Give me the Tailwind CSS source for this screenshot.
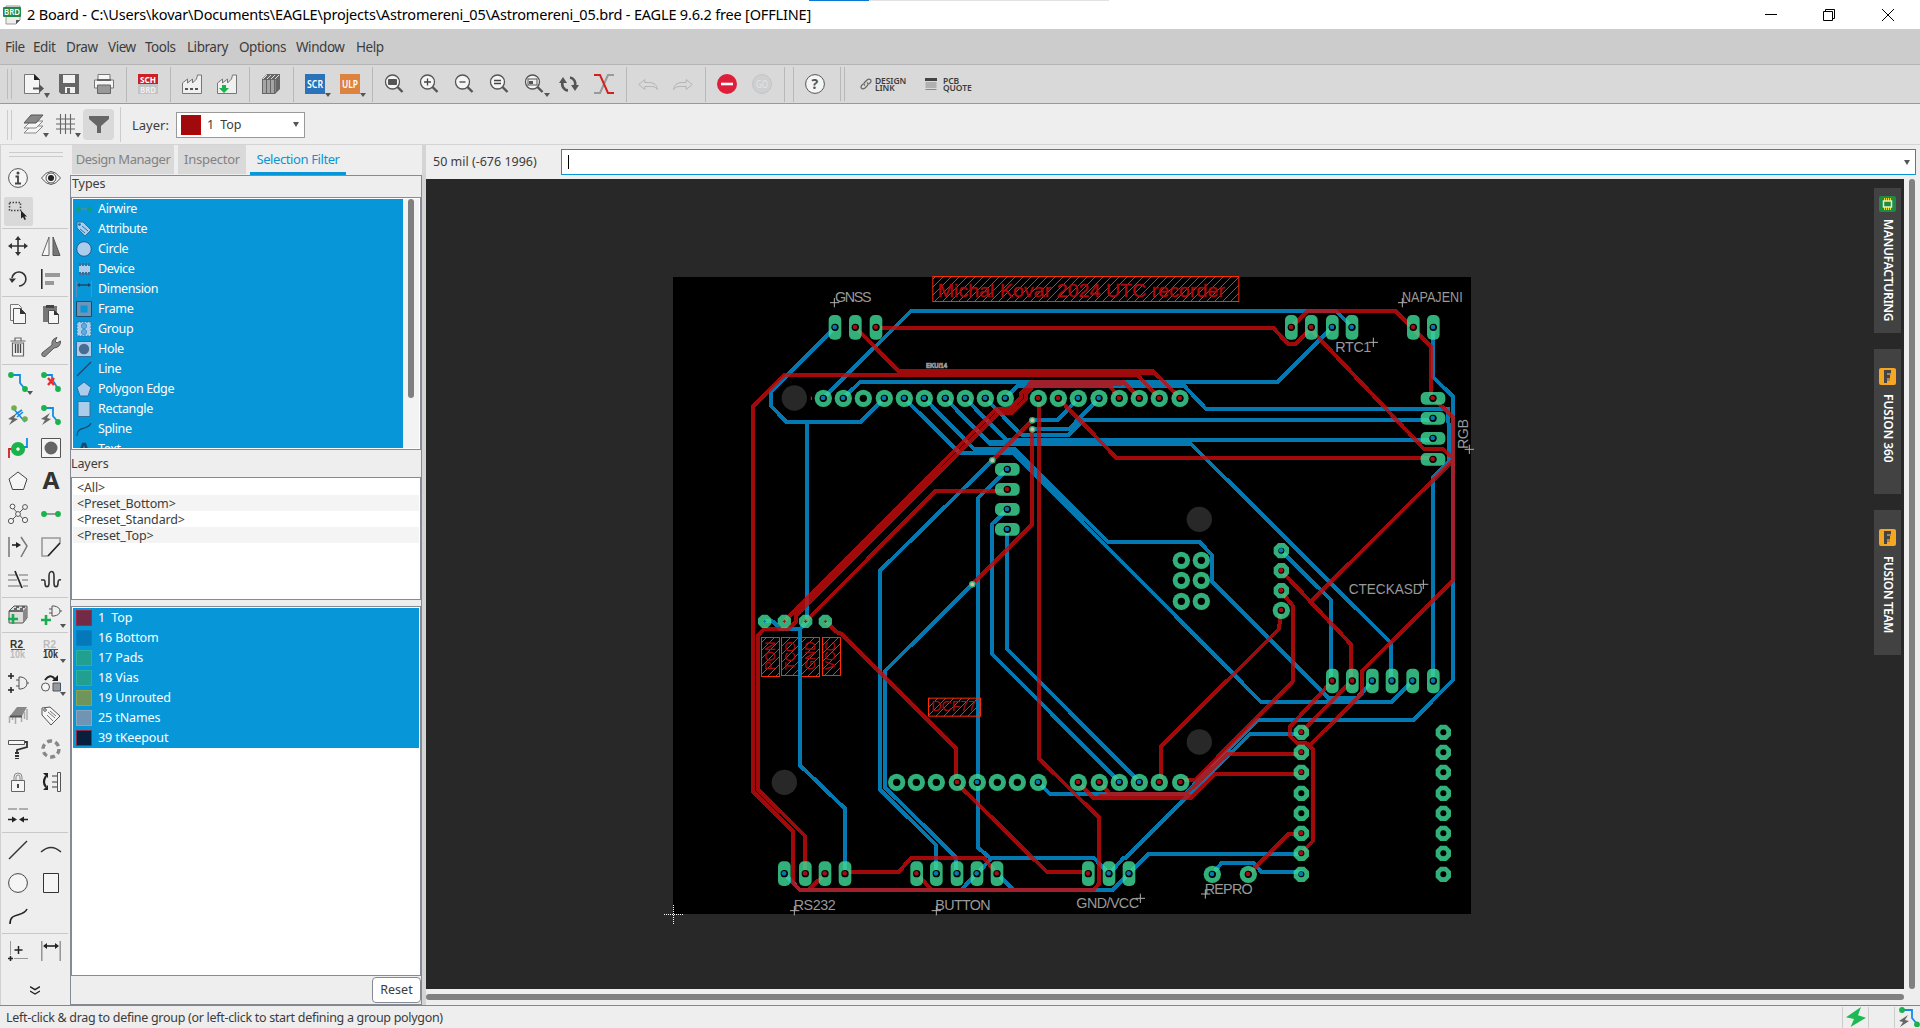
<!DOCTYPE html>
<html lang="en">
<head>
<meta charset="utf-8">
<title>2 Board - EAGLE</title>
<script src="https://cdn.jsdelivr.net/npm/@tailwindcss/browser@4"></script>
</head>
<body class="w-[1920px] h-[1028px] overflow-hidden flex flex-col bg-[#eeeeee] text-[#3c3c3c] font-['Noto_Sans',sans-serif] text-[12.5px] leading-none whitespace-nowrap">

<!-- shared shapes -->
<svg width="0" height="0" class="absolute">
  <defs>
    <g id="lens" fill="none" stroke="#555"><circle cx="8.500" cy="8" r="7" fill="#f5f5f5" stroke-width="1.300"/><path d="M13.500 13l5 5" stroke-width="2.400"/></g>
    <path id="bolt" d="M9 0 0 6l4 1-3 5 9-6-4-1z" fill="#666"/>
  </defs>
</svg>

<header class="relative h-[29px] shrink-0 bg-white flex items-center text-black">
  <svg class="ml-[3px] w-[18px] h-[20px]" viewBox="0 0 18 20"><path d="M3 1h14v14l-4 4H3z" fill="#eee" stroke="#999"/><path d="M13 19v-4h4z" fill="#555"/><rect y="2" width="18" height="10" rx="1" fill="#1f8a44"/><text x="1" y="10" font-size="8" font-weight="600" fill="#fff" textLength="16" lengthAdjust="spacingAndGlyphs" font-family="Noto Sans">BRD</text></svg>
  <span class="ml-[6px] text-[14.5px] tracking-[-0.18px]">2 Board - C:\Users\kovar\Documents\EAGLE\projects\Astromereni_05\Astromereni_05.brd - EAGLE 9.6.2 free [OFFLINE]</span>
  <div class="absolute left-[809px] top-0 flex h-px w-[300px] bg-[#e2e2e2]"><div class="w-[60px] bg-[#0a78d4]"></div></div>
  <svg class="ml-auto mr-[26px] w-[130px] h-[14px]" viewBox="0 0 130 14" fill="none" stroke="#000"><path d="M1 6.500h12M59.500 3.500h9v9h-9zM61.500 3V1.500h9v9H69M118 1l12 12M130 1l-12 12"/></svg>
</header>

<nav class="h-[36px] shrink-0 bg-[#cccccc] border-b border-[#b4b4b4] flex items-center pl-[5px] pt-[2px] gap-[10px] text-[13.5px] tracking-[-0.45px]">
  <span class="w-[18px]">File</span><span class="w-[23px]">Edit</span><span class="w-[32px]">Draw</span><span class="w-[27px]">View</span><span class="w-[32px]">Tools</span><span class="w-[42px]">Library</span><span class="w-[47px]">Options</span><span class="w-[50px]">Window</span><span>Help</span>
</nav>

<div class="h-[39px] shrink-0 bg-[#d9d9d9] border-b border-[#999999] flex items-center pl-[7px]">
  <div class="w-[5px] h-[30px] border-x border-[#bbb]"></div>
  <div class="flex gap-[15px] ml-[12px]">
    <svg class="w-[26px] h-[24px] mt-[4px] mr-[-6px]" viewBox="0 0 26 24"><path d="M.5.500h10l5 5v14H.500z" fill="#f5f5f5" stroke="#777"/><path d="M10 0v6h6z" fill="#222"/><path d="M9 14.500h7" stroke="#555" stroke-width="2"/><path d="M15 10l5 4.500-5 4.500z" fill="#555"/><path d="M20 19h6l-3 5z" fill="#555"/></svg>
    <svg class="w-[20px] h-[20px] mt-[4px]" viewBox="0 0 20 20"><path d="M0 0h20v20H2l-2-2z" fill="#666"/><path d="M4 1h12v8H4zM6 13h10v6H6z" fill="#f2f2f2"/><path d="M8 14h3v5H8z" fill="#666"/></svg>
    <svg class="w-[20px] h-[20px] mt-[4px]" viewBox="0 0 20 20"><path d="M4 .5h12V6H4zM.500 6h19v8H.500z" fill="#f5f5f5" stroke="#777"/><path d="M3 6h14" stroke="#555" stroke-width="1.500"/><path d="M3.500 11h13v8.500h-13z" fill="#999" stroke="#666"/></svg>
  </div>
  <div class="w-px h-[35px] bg-[#b8b8b8] ml-[12px] mr-[11px]"></div>
  <svg class="w-[20px] h-[20px]" viewBox="0 0 20 20" font-family="Noto Sans" font-weight="700" font-size="9"><rect width="20" height="10" fill="#cc2027"/><rect y="10" width="20" height="10" fill="#c4c4c4"/><text x="2" y="8.500" fill="#fff" textLength="16" lengthAdjust="spacingAndGlyphs">SCH</text><text x="2" y="18.500" fill="#eee" textLength="16" lengthAdjust="spacingAndGlyphs">BRD</text></svg>
  <div class="w-px h-[35px] bg-[#b8b8b8] ml-[12px] mr-[11px]"></div>
  <div class="flex gap-[15px]">
    <svg class="w-[20px] h-[20px]" viewBox="0 0 20 20"><path d="M.5 19.500V9l5-4v4l5-4v4l4-4 1-4h4v18.500z" fill="#f0f0f0" stroke="#777"/><path d="M3 15h13" stroke="#555" stroke-width="2" stroke-dasharray="3 2"/></svg>
    <svg class="w-[20px] h-[20px]" viewBox="0 0 20 20"><path d="M.5 19.500V9l5-4v4l5-4v4l4-4 1-4h4v18.500z" fill="#f0f0f0" stroke="#777"/><path d="M5 11h4v3h3l-5 5-5-5h3z" fill="#18b44b"/></svg>
  </div>
  <div class="w-px h-[35px] bg-[#b8b8b8] ml-[12px] mr-[11px]"></div>
  <svg class="w-[20px] h-[20px]" viewBox="0 0 20 20"><path d="M1 5l5-5h13v15l-5 5H1z" fill="#666"/><path d="M2 6h3v13H2zM6 6h3v13H6zM10 6h3v13h-3z" fill="#a5a5a5"/><path d="M2 5l4-4M6 5l4-4M10 5l4-4M14 5l4-4" stroke="#ddd"/><path d="M14.500 6v12" stroke="#888"/></svg>
  <div class="w-px h-[35px] bg-[#b8b8b8] ml-[12px] mr-[11px]"></div>
  <div class="flex gap-[9px]">
    <svg class="w-[26px] h-[24px] mt-[4px]" viewBox="0 0 26 24" font-family="Noto Sans" font-weight="600" font-size="10"><rect width="20" height="20" fill="#2a72ba"/><text x="2" y="13.500" fill="#fff" textLength="16" lengthAdjust="spacingAndGlyphs">SCR</text><path d="M20 19h6l-3 4z" fill="#555"/></svg>
    <svg class="w-[26px] h-[24px] mt-[4px]" viewBox="0 0 26 24" font-family="Noto Sans" font-weight="600" font-size="10"><rect width="20" height="20" fill="#dc843f"/><text x="2" y="13.500" fill="#fff" textLength="16" lengthAdjust="spacingAndGlyphs">ULP</text><path d="M20 19h6l-3 4z" fill="#555"/></svg>
  </div>
  <div class="w-px h-[35px] bg-[#b8b8b8] ml-[6px] mr-[11px]"></div>
  <div class="flex gap-[15px]">
    <svg class="w-[20px] h-[20px]" viewBox="0 0 20 20"><use href="#lens"/><rect x="4" y="5" width="9" height="6" rx="1" fill="#555"/></svg>
    <svg class="w-[20px] h-[20px]" viewBox="0 0 20 20"><use href="#lens"/><path d="M5 8h7M8.500 4.500v7" stroke="#444" stroke-width="1.300"/></svg>
    <svg class="w-[20px] h-[20px]" viewBox="0 0 20 20"><use href="#lens"/><path d="M5.500 8h6" stroke="#444" stroke-width="1.300"/></svg>
    <svg class="w-[20px] h-[20px]" viewBox="0 0 20 20"><use href="#lens"/><path d="M5 6.500h7M5 9.500h7" stroke="#444" stroke-width="1.300"/></svg>
    <svg class="w-[26px] h-[20px] mr-[-6px] overflow-visible" viewBox="0 0 26 20"><use href="#lens"/><rect x="4" y="5" width="9" height="6" fill="#eee" stroke="#555"/><rect x="5" y="7" width="4" height="3" fill="#555"/><path d="M20 19h6l-3 4z" fill="#555"/></svg>
    <svg class="w-[20px] h-[20px]" viewBox="0 0 20 20" fill="none" stroke="#555" stroke-width="2.600"><path d="M9 16.500A6.500 6.500 0 0 1 4 7M11 3.500A6.500 6.500 0 0 1 16 12"/><path d="M4 3l4 6H0zM16 17l-4-6h8z" fill="#555" stroke="none"/></svg>
    <svg class="w-[20px] h-[20px]" viewBox="0 0 20 20" fill="none" stroke-width="2"><path d="M0 19h6l8-18h6" stroke="#999"/><path d="M0 1h6l8 18h6" stroke="#d2201e"/></svg>
  </div>
  <div class="w-px h-[35px] bg-[#b8b8b8] ml-[12px] mr-[11px]"></div>
  <div class="flex gap-[15px]">
    <svg class="w-[20px] h-[20px]" viewBox="0 0 20 20" fill="none" stroke="#b4b4b4"><path d="M.8 10.500l6-5v3h4c6 0 8 3 8.500 7-2-3-4-3-8.500-3h-4v3z"/></svg>
    <svg class="w-[20px] h-[20px]" viewBox="0 0 20 20" fill="none" stroke="#b4b4b4"><path d="M19.200 10.500l-6-5v3h-4c-6 0-8 3-8.500 7 2-3 4-3 8.500-3h4v3z"/></svg>
  </div>
  <div class="w-px h-[35px] bg-[#b8b8b8] ml-[12px] mr-[11px]"></div>
  <div class="flex gap-[15px]">
    <svg class="w-[20px] h-[20px]" viewBox="0 0 20 20"><circle cx="10" cy="10" r="10" fill="#de1f39"/><path d="M4 10h12" stroke="#fff" stroke-width="2.600"/></svg>
    <svg class="w-[20px] h-[20px]" viewBox="0 0 20 20"><circle cx="10" cy="10" r="9.500" fill="#cfcfcf" stroke="#c4c4c4"/><text x="4" y="14" font-size="10" font-family="Noto Sans" fill="#e4e4e4" textLength="12" lengthAdjust="spacingAndGlyphs">GO</text></svg>
  </div>
  <div class="w-px h-[35px] bg-[#b8b8b8] ml-[12px]"></div>
  <div class="w-px h-[35px] bg-[#b8b8b8] ml-[8px] mr-[11px]"></div>
  <svg class="w-[20px] h-[20px]" viewBox="0 0 20 20"><circle cx="10" cy="10" r="9.400" fill="#f5f5f5" stroke="#555"/><text x="6.500" y="15" font-size="14" font-weight="700" font-family="Noto Sans" fill="#555">?</text></svg>
  <div class="w-[5px] h-[34px] border-x border-[#b8b8b8] ml-[15px]"></div>
  <svg class="w-[12px] h-[12px] ml-[15px]" viewBox="0 0 12 12" fill="none" stroke="#666" stroke-width="1.200"><path d="M5 7.500c-2-1.500-1-2.500 0-3.500l2-2c2.500-2 5 0 3.500 2.500L9 6M7 4.500c2 1.500 1 2.500 0 3.500L5 10c-2.500 2-5 0-3.500-2.500L3 6"/></svg>
  <div class="ml-[3px] w-[45px] text-[8.500px] leading-[7.500px] font-semibold tracking-[-0.1px]"><div class="h-[7.500px]">DESIGN</div><div class="h-[7.500px]">LINK</div></div>
  <svg class="w-[12px] h-[13px] ml-[5px]" viewBox="0 0 12 13"><path d="M0 0h12v3H0z" fill="#444"/><path d="M.5 5h11M.500 7h11M.500 9h11M.500 11.500h11" stroke="#888"/></svg>
  <div class="ml-[6px] text-[8.500px] leading-[7.500px] font-semibold tracking-[-0.1px]"><div class="h-[7.500px]">PCB</div><div class="h-[7.500px]">QUOTE</div></div>
</div>

<div class="h-[41px] shrink-0 border-b border-[#d4d4d4] flex items-center pl-[7px] pt-px">
  <div class="w-[5px] h-[30px] border-x border-[#ccc]"></div>
  <svg class="w-[26px] h-[24px] ml-[11px] mt-[3px]" viewBox="0 0 26 24" stroke="#888"><path d="M1 19l7-7h12l-7 7z" fill="#f5f5f5"/><path d="M1 14l7-7h12l-7 7z" fill="#f5f5f5"/><path d="M1 9l7-8h12l-7 8z" fill="#888" stroke="#555"/><path d="M20 19h6l-3 4.500z" fill="#555" stroke="none"/></svg>
  <svg class="w-[26px] h-[24px] ml-[7px] mt-[3px]" viewBox="0 0 26 24"><path d="M0 5h19M0 10h19M0 15h19M4.500 0v20M9.500 0v20M14.500 0v20" stroke="#666" stroke-width="1.100"/><path d="M19 19h6l-3 4.500z" fill="#555"/></svg>
  <div class="ml-px w-[31px] h-[31px] rounded-sm bg-[#d9d9d9] flex items-center justify-center"><svg class="w-[20px] h-[17px]" viewBox="0 0 20 17"><path d="M0 0h20v3l-8 7v7H8v-7L0 3z" fill="#666"/></svg></div>
  <div class="w-px h-[35px] bg-[#ccc] ml-[6px]"></div>
  <span class="ml-[11px] w-[44px] text-[13px] mt-px">Layer:</span>
  <div class="w-[129px] h-[26px] bg-white border border-[#999] flex items-center pl-[4px] pr-[5px]"><div class="w-[20px] h-[20px] bg-[#a00a0c] border border-[#c00000]"></div><span class="ml-[6px] mt-px tracking-[-0.1px]">1 &nbsp;Top</span><svg class="ml-auto w-[6px] h-[5px]" viewBox="0 0 6 5"><path d="M0 0h6L3 5z" fill="#555"/></svg></div>
</div>

<main class="flex h-[860px] shrink-0">
  <!-- drawing tools -->
  <aside class="w-[70px] border-l border-[#d0d0d0] shrink-0 pl-px">
    <div class="mx-[7px] mt-[7px] h-[5px] border-y border-[#ccc]"></div>
    <div class="mt-[5px] w-[66px] grid grid-cols-2 [&>svg]:w-[20px] [&>svg]:h-[20px] [&>svg]:m-[6px] [&>svg]:overflow-visible [&>hr]:col-span-2 [&>hr]:h-px [&>hr]:mb-px [&>hr]:border-0 [&>hr]:bg-[#c8c8c8] grid-rows-[33px_33px_2px_33px_33px_2px_33px_33px_2px_33px_33px_33px_33px_33px_33px_33px_2px_33px_2px_33px_33px_33px_33px_33px_33px_2px_33px_33px_33px_2px_33px]">
      <svg viewBox="0 0 20 20"><circle cx="10" cy="10" r="9.400" fill="#f5f5f5" stroke="#555"/><circle cx="10" cy="5" r="1.500" fill="#444"/><path d="M7.500 8.500H10V15M7 15.500h6" fill="none" stroke="#444" stroke-width="1.800"/></svg>
      <svg viewBox="0 0 20 20"><path d="M.5 10Q10-3 19.500 10Q10 23 .5 10z" fill="#f5f5f5" stroke="#555"/><circle cx="10" cy="10" r="5" fill="none" stroke="#555"/><circle cx="10" cy="10" r="3" fill="#222"/></svg>
      <svg viewBox="0 0 20 20"><rect x="-4" y="-4" width="29" height="29" rx="2" fill="#d9d9d9"/><path d="M1.500 1.500h11v8h-11z" fill="none" stroke="#444" stroke-width="1.500" stroke-dasharray="1.500 1.500"/><path d="M13 9.500v8l2-1.500 1.500 3 1.500-.8-1.500-2.700h2.500z" fill="#222"/></svg>
      <span></span>
      <hr>
      <svg viewBox="0 0 20 20"><path d="M10 2v16M2 10h16" stroke="#333" stroke-width="1.600"/><path d="M10 0l3 4H7zM10 20l3-4H7zM0 10l4-3v6zM20 10l-4-3v6z" fill="#333"/></svg>
      <svg viewBox="0 0 20 20"><path d="M8 1v18.500H1z" fill="#f5f5f5" stroke="#666"/><path d="M12 1v18.500h7z" fill="#777" stroke="#555"/></svg>
      <svg viewBox="0 0 20 20"><path d="M4 9a7 7 0 1 1 7 8" fill="none" stroke="#333" stroke-width="1.600"/><path d="M1 9.500h7L4 14z" fill="#333"/></svg>
      <svg viewBox="0 0 20 20"><path d="M.8 0v20" stroke="#222" stroke-width="1.500"/><path d="M4 4h15v4H4zM4 12h9v4H4z" fill="#999"/></svg>
      <hr>
      <svg viewBox="0 0 20 20"><path d="M2.500.500h8l3 3v13h-11z" fill="#f5f5f5" stroke="#777"/><path d="M5.500 4.500h7l5 5v10h-12z" fill="#f5f5f5" stroke="#555"/><path d="M12 4v6h6z" fill="#333"/></svg>
      <svg viewBox="0 0 20 20"><path d="M2 2h14v16H2z" fill="#777"/><path d="M5 2.500h8" stroke="#444" stroke-width="3"/><path d="M7.500 6.500h6l4 4v9h-10z" fill="#f5f5f5" stroke="#555"/><path d="M13 6v5h5z" fill="#333"/></svg>
      <svg viewBox="0 0 20 20"><path d="M2.500 4h15M7 4V1h6v3M4.500 6v13h11V6z" fill="#f5f5f5" stroke="#666" stroke-width="1.200"/><path d="M7.500 7v9M10 7v9M12.500 7v9" stroke="#444" stroke-width="1.400"/></svg>
      <svg viewBox="0 0 20 20"><path d="M1 16L11 8Q10 2 16 .5L14 4l2 2 3.500-2Q20 10 13 11L4 19.500Q0 20 1 16z" fill="#888" stroke="#555"/></svg>
      <hr>
      <svg viewBox="0 0 20 20"><path d="M3 3h9v8l5 6" fill="none" stroke="#0f8de6" stroke-width="1.800"/><circle cx="3" cy="3" r="2.900" fill="#18b44b"/><circle cx="17" cy="17" r="2.900" fill="#18b44b"/><path d="M19 19h6l-3 4z" fill="#555"/></svg>
      <svg viewBox="0 0 20 20"><path d="M3 3h8v4l6 10" fill="none" stroke="#0f8de6" stroke-width="1.800"/><circle cx="3" cy="3" r="2.900" fill="#18b44b"/><circle cx="17" cy="17" r="2.900" fill="#18b44b"/><path d="M7 6l6 7M13 6l-6 7" stroke="#f02828" stroke-width="2.400"/></svg>
      <svg viewBox="0 0 20 20"><path d="M5 3l12 14M8 9l6-4M9 12l6-5" fill="none" stroke="#0f8de6" stroke-width="1.600"/><circle cx="6" cy="3" r="2.800" fill="#6fae4c"/><circle cx="17" cy="14" r="2.800" fill="#6fae4c"/><use href="#bolt" y="8"/></svg>
      <svg viewBox="0 0 20 20"><path d="M3 3h9v8l5 6" fill="none" stroke="#0f8de6" stroke-width="1.800"/><circle cx="3" cy="3" r="2.900" fill="#18b44b"/><circle cx="17" cy="17" r="2.900" fill="#18b44b"/><use href="#bolt" y="8"/></svg>
      <svg viewBox="0 0 20 20"><path d="M1 20V11h5" fill="none" stroke="#c22" stroke-width="1.800"/><path d="M19 0v9h-5" fill="none" stroke="#0f8de6" stroke-width="1.800"/><circle cx="10" cy="11" r="4.300" fill="#fff" stroke="#18b44b" stroke-width="5.500"/><circle cx="10" cy="11" r="1.500" fill="#fff"/></svg>
      <svg viewBox="0 0 20 20"><path d="M.5.500h19v19H.500z" fill="#f5f5f5" stroke="#555"/><circle cx="10" cy="10" r="6.500" fill="#666"/></svg>
      <svg viewBox="0 0 20 20"><path d="M10 1l9 7-3.500 10.500h-11L1 8z" fill="#f5f5f5" stroke="#444"/></svg>
      <svg viewBox="0 0 20 20"><text x="1.500" y="18" font-size="24" font-weight="700" font-family="Noto Sans" fill="#333" textLength="17" lengthAdjust="spacingAndGlyphs">A</text></svg>
      <svg viewBox="0 0 20 20" fill="#f5f5f5" stroke="#555"><path d="M4 3l13 14M17 3L3 17"/><circle cx="4.500" cy="2.500" r="2.400"/><circle cx="17" cy="3" r="2.400"/><circle cx="10" cy="10" r="2.400"/><circle cx="3" cy="17" r="2.600"/><circle cx="17" cy="16" r="2.600"/></svg>
      <svg viewBox="0 0 20 20"><path d="M3 10h14" stroke="#999" stroke-width="2"/><circle cx="3" cy="10" r="2.900" fill="#18b44b"/><circle cx="17" cy="10" r="2.900" fill="#18b44b"/></svg>
      <svg viewBox="0 0 20 20"><path d="M1 0v20M13 0l6 9-6 11" fill="none" stroke="#777" stroke-width="1.500"/><path d="M4 8h5" stroke="#222" stroke-width="1.600"/><path d="M8 5l5 3-5 3z" fill="#222"/></svg>
      <svg viewBox="0 0 20 20"><path d="M19 6V1H1v18h6" fill="none" stroke="#999" stroke-width="1.600"/><path d="M19 6L7 19" stroke="#222" stroke-width="1.700"/></svg>
      <svg viewBox="0 0 20 20"><path d="M0 5h8M11 5h9M0 10h9M14 10h6M0 16h12M15 16h5" stroke="#999" stroke-width="1.500"/><path d="M7 1l7 17" stroke="#222" stroke-width="1.700"/></svg>
      <svg viewBox="0 0 20 20"><path d="M0 10h3q1 0 1 3c0 5 4 5 4 0V6c0-6 5-6 5 0v7c0 5 4 5 4 0q0-4 3-3" fill="none" stroke="#333" stroke-width="1.600"/></svg>
      <hr>
      <svg viewBox="0 0 20 20"><path d="M1 6l5-5h13v12l-4 5H1z" fill="#ddd" stroke="#555"/><path d="M15 18V6l4-5v12z" fill="#888"/><path d="M1 6h14M6 4h3M12 4h3M8 2h3M14 2h3" stroke="#444" stroke-width="1.500"/><path d="M5 9v10M0 14h10" stroke="#1cab50" stroke-width="2.600"/></svg>
      <svg viewBox="0 0 20 20"><path d="M11 1h2q6 1 6 5t-6 5h-2zM8 4h3M8 8h3M19 6h2" fill="none" stroke="#555"/><path d="M5 10v10M0 15h10" stroke="#1cab50" stroke-width="2.600"/><path d="M19 19h6l-3 4z" fill="#555"/></svg>
      <hr>
      <svg viewBox="0 0 20 20" font-family="Liberation Sans" font-weight="700" font-size="10"><text x="2" y="7.500" fill="#333" textLength="13">R2</text><path d="M3 9.500h14" stroke="#555"/><text x="2" y="18" fill="#bbb" textLength="15" lengthAdjust="spacingAndGlyphs">10k</text></svg>
      <svg viewBox="0 0 20 20" font-family="Liberation Sans" font-weight="700" font-size="10"><text x="2" y="7.500" fill="#bbb" textLength="13">R2</text><path d="M3 9.500h14" stroke="#555"/><text x="2" y="18" fill="#333" textLength="15" lengthAdjust="spacingAndGlyphs">10k</text><path d="M19 19h6l-3 4z" fill="#555"/></svg>
      <svg viewBox="0 0 20 20"><path d="M11 4h2q6 1 6 6t-6 6h-2zM8 7h3M8 13h3M19 10h2" fill="none" stroke="#555"/><path d="M3 0v6M0 3h6M3 14v6M0 17h6" stroke="#222" stroke-width="1.500"/></svg>
      <svg viewBox="0 0 20 20"><circle cx="4.500" cy="14" r="4" fill="#f5f5f5" stroke="#555"/><path d="M12 10h7.500v8H12z" fill="#999" stroke="#456"/><path d="M4 7q5-7 10-1" fill="none" stroke="#222" stroke-width="2"/><path d="M17 2v6h-6z" fill="#222"/><path d="M19 19h6l-3 4z" fill="#555"/></svg>
      <svg viewBox="0 0 20 20"><path d="M2 10L9 1h10l-5 9z" fill="#888"/><path d="M1.500 10v7M4.500 10v4M7.500 10v8M13.500 10v6M16.500 6v7M19 3v11" stroke="#aaa" stroke-width="1.500"/><path d="M2 9.500h12v2H2z" fill="#555"/></svg>
      <svg viewBox="0 0 20 20"><path d="M1 2l8-1 10 9-9 9L1 9z" fill="#f5f5f5" stroke="#555"/><circle cx="4" cy="4" r="1.300" fill="none" stroke="#555"/><path d="M7 6l7 6M6 9l6 6M9 5l6 5" stroke="#777"/></svg>
      <svg viewBox="0 0 20 20"><path d="M.5 1.500h16v4H.500z" fill="#f5f5f5" stroke="#555"/><path d="M17 3h2v5L9 11v3" fill="none" stroke="#333" stroke-width="1.800"/><path d="M9 13v7" stroke="#333" stroke-width="4" stroke-dasharray="2 1"/></svg>
      <svg viewBox="0 0 20 20"><circle cx="10" cy="10" r="8" fill="none" stroke="#888" stroke-width="3.400" stroke-dasharray="5 3.380"/></svg>
      <svg viewBox="0 0 20 20"><path d="M6 9V5q0-4 4-4t4 4v4M8 9V5q0-2 2-2t2 2v4" fill="none" stroke="#888"/><path d="M3.500 8.500h13v11h-13z" fill="#f5f5f5" stroke="#666"/><path d="M10 12v4" stroke="#444" stroke-width="2"/></svg>
      <svg viewBox="0 0 20 20"><path d="M5 4q-4 6 0 11" fill="none" stroke="#222" stroke-width="2.200"/><path d="M2 1h5v5zM2 18h5v-5z" fill="#222"/><path d="M16.500.500h3v19h-3z" fill="#f5f5f5" stroke="#555"/><path d="M11 4h5M11 10h5M11 15h5" stroke="#777" stroke-width="1.500"/></svg>
      <svg viewBox="0 0 20 20"><path d="M0 4h9M11 4h9" stroke="#999" stroke-width="1.500"/><path d="M0 14.500h6M14 14.500h6" stroke="#222" stroke-width="1.500"/><path d="M4 11.500l5 3-5 3zM16 11.500l-5 3 5 3z" fill="#222"/></svg>
      <span></span>
      <hr>
      <svg viewBox="0 0 20 20"><path d="M1 19L19 1" stroke="#333" stroke-width="1.400"/></svg>
      <svg viewBox="0 0 20 20"><path d="M0 12q10-9 20 0" fill="none" stroke="#333" stroke-width="1.500"/></svg>
      <svg viewBox="0 0 20 20"><circle cx="10" cy="10" r="9.400" fill="#f5f5f5" stroke="#444"/></svg>
      <svg viewBox="0 0 20 20"><path d="M2.500.500h15v19h-15z" fill="#f5f5f5" stroke="#333"/></svg>
      <svg viewBox="0 0 20 20"><path d="M2 18C2 5 15 12 19 3" fill="none" stroke="#222" stroke-width="1.600"/></svg>
      <span></span>
      <hr>
      <svg viewBox="0 0 20 20"><path d="M2.500 0v14M6 17.500h14" stroke="#999"/><path d="M10.500 5v8M6.500 9h8M2.500 15v5M0 17.500h5" stroke="#222" stroke-width="1.500"/></svg>
      <svg viewBox="0 0 20 20"><path d="M.8 0v20M19.200 0v20" stroke="#888" stroke-width="1.300"/><path d="M4 5h12" stroke="#222" stroke-width="1.600"/><path d="M6 2L2 5l4 3zM14 2l4 3-4 3z" fill="#222"/></svg>
    </div>
    <svg class="ml-[28px] mt-[18px] w-[10px] h-[9px]" viewBox="0 0 10 9" fill="none" stroke="#222" stroke-width="1.400"><path d="M0 .7l5 3 5-3M0 5l5 3 5-3"/></svg>
  </aside>

  <!-- selection filter dock -->
  <section class="w-[352px] shrink-0 flex flex-col">
    <div class="h-[30px] flex items-start gap-[4px] pl-[2px] text-[13px] text-[#828282] text-center">
      <div class="w-[102px] h-[29px] pt-[8px] bg-[#d9d9d9] tracking-[-0.45px]">Design Manager</div>
      <div class="w-[68px] h-[29px] pt-[8px] bg-[#d9d9d9] tracking-[-0.25px]">Inspector</div>
      <div class="w-[96px] h-[30px] pt-[8px] border-b-[3px] border-[#0796d8] text-[#0796d8] tracking-[-0.4px]">Selection Filter</div>
    </div>
    <div class="flex-1 flex flex-col border border-[#868a94]">
      <div class="h-[21px] pl-px pt-[2px] tracking-[-0.1px]">Types</div>
      <div class="h-[253px] overflow-hidden border border-[#868a94] bg-white flex justify-between p-px">
        <div class="w-[330px] h-[249px] overflow-hidden bg-[#0796d8] text-white pl-[3px] tracking-[-0.35px] [&>div]:h-[20px] [&>div]:flex [&>div]:items-center [&>div]:gap-[6px] [&_svg]:w-[16px] [&_svg]:h-[16px]">
          <div><svg viewBox="0 0 16 16"><path d="M3 8h10" stroke="#4a8ba8" stroke-width="1.500"/><circle cx="2.500" cy="8" r="2.400" fill="#12a074"/><circle cx="13.500" cy="8" r="2.400" fill="#12a074"/></svg>Airwire</div>
          <div><svg viewBox="0 0 16 16"><path d="M1 1h6l8 8-6 6-8-8z" fill="#aacdec" stroke="#2b70a4"/><circle cx="3.500" cy="3.500" r="1.300" fill="#0a6db0"/><path d="M6 5l6 5M4 8l5 4" stroke="#2b70a4"/></svg>Attribute</div>
          <div><svg viewBox="0 0 16 16"><circle cx="8" cy="8" r="7.300" fill="#aacdec" stroke="#1c5f94"/></svg>Circle</div>
          <div><svg viewBox="0 0 16 16"><path d="M3 4h11v8H3z" fill="#aacdec"/><path d="M3 3.500h11M3 12.500h11" stroke="#3e6c92" stroke-width="3" stroke-dasharray="2 1"/></svg>Device</div>
          <div><svg viewBox="0 0 16 16"><path d="M.5 0v16M15.500 0v16" stroke="#5b8fb8"/><path d="M2 4h12" stroke="#1b4668" stroke-width="1.400"/><path d="M4 2L1 4l3 2zM12 2l3 2-3 2z" fill="#1b4668"/></svg>Dimension</div>
          <div><svg viewBox="0 0 16 16"><path d="M2.500 2.500h11v11h-11z" fill="none" stroke="#6e94b8" stroke-width="4"/><path d="M.5.500h15v15H.500z" fill="none" stroke="#1f486c"/></svg>Frame</div>
          <div><svg viewBox="0 0 16 16"><path d="M1 1h14v14H1z" fill="#aacdec" stroke="#2b70a4" stroke-dasharray="2 1"/><circle cx="8" cy="5" r="2.600" fill="#64acde" stroke="#3c94d0"/><circle cx="8" cy="11" r="2.600" fill="#64acde" stroke="#3c94d0"/></svg>Group</div>
          <div><svg viewBox="0 0 16 16"><path d="M.5.500h15v15H.500z" fill="#aacdec" stroke="#3a719c"/><circle cx="8" cy="8" r="5.200" fill="#476e92"/></svg>Hole</div>
          <div><svg viewBox="0 0 16 16"><path d="M1 15L15 1" stroke="#1b4668" stroke-width="1.200"/></svg>Line</div>
          <div><svg viewBox="0 0 16 16"><path d="M8 1l7 5.500-3 8.500H4L1 6.500z" fill="#aacdec" stroke="#2b70a4"/></svg>Polygon Edge</div>
          <div><svg viewBox="0 0 16 16"><path d="M2 .5h12v15H2z" fill="#aacdec" stroke="#3a719c"/></svg>Rectangle</div>
          <div><svg viewBox="0 0 16 16"><path d="M1 15C1 4 12 10 15 2" fill="none" stroke="#1b4668" stroke-width="1.200"/></svg>Spline</div>
          <div><svg viewBox="0 0 16 16"><path d="M3 15L7 3h2l4 12" fill="none" stroke="#1b4668" stroke-width="2.500"/></svg>Text</div>
        </div>
        <div class="w-[16px] bg-[#f3f3f3] flex justify-center"><div class="w-[6px] h-[199px] rounded-full bg-[#808080]"></div></div>
      </div>
      <div class="h-[27px] pt-[8px] tracking-[-0.1px]">Layers</div>
      <div class="h-[123px] border border-[#868a94] bg-white p-px tracking-[-0.15px] [&>div]:h-[16px] [&>div]:leading-[17px] [&>div]:pl-[4px]">
        <div>&lt;All&gt;</div><div class="bg-[#f4f4f4]">&lt;Preset_Bottom&gt;</div><div>&lt;Preset_Standard&gt;</div><div class="bg-[#f4f4f4]">&lt;Preset_Top&gt;</div>
      </div>
      <div class="mt-[6px] h-[370px] border border-[#868a94] bg-white p-px">
        <div class="bg-[#0796d8] text-white pl-[3px] tracking-[-0.1px] [&>div]:h-[20px] [&>div]:flex [&>div]:items-center [&>div]:gap-[6px] [&_i]:w-[16px] [&_i]:h-[16px] [&_i]:border">
          <div><i class="bg-[#722a46] border-[#9a2b48]"></i>1 &nbsp;Top</div>
          <div><i class="bg-[#0478b8] border-[#0482c8]"></i>16 Bottom</div>
          <div><i class="bg-[#219f91] border-[#2bb3a0]"></i>17 Pads</div>
          <div><i class="bg-[#219f91] border-[#2bb3a0]"></i>18 Vias</div>
          <div><i class="bg-[#6f945c] border-[#8aa552]"></i>19 Unrouted</div>
          <div><i class="bg-[#7094b4] border-[#8aa5bd]"></i>25 tNames</div>
          <div><i class="bg-[#08203c] border-[#8a2b48]"></i>39 tKeepout</div>
        </div>
      </div>
      <div class="flex justify-end pt-px"><div class="w-[49px] h-[26px] rounded-[4px] border border-[#868a94] bg-white flex items-center justify-center">Reset</div></div>
    </div>
  </section>
  <div class="w-[4px] bg-[#d4d4d4] shrink-0"></div>

  <section class="flex-1 flex flex-col">
    <div class="h-[34px] flex items-center pl-[7px] pr-[4px]">
      <span class="w-[128px]">50 mil (-676 1996)</span>
      <div class="flex-1 h-[26px] bg-white border border-[#0796d8] flex items-center px-[5px]"><div class="w-px h-[14px] ml-px bg-black"></div><svg class="ml-auto w-[6px] h-[5px]" viewBox="0 0 6 5"><path d="M0 0h6L3 5z" fill="#555"/></svg></div>
    </div>
    <div class="flex h-[810px]">
      <div class="relative w-[1478px] bg-[#282828]">
        <svg class="w-[1478px] h-[810px]" viewBox="-732 -273 4434 2430">
          <defs><pattern id="hatch" width="24" height="24" patternUnits="userSpaceOnUse"><path d="M-2 26L26-2M-2 2L2-2M22 26L26 22" stroke="#ff2a00" stroke-width="3"/></pattern></defs>
          <rect x="9" y="21" width="2394" height="1911" fill="#000"/>
          <g fill="#282828"><circle cx="373" cy="384" r="38"/><circle cx="1588" cy="748" r="38"/><circle cx="1588" cy="1416" r="38"/><circle cx="343" cy="1537" r="38"/></g>
          <!-- bottom copper -->
          <g fill="none" stroke="#0478b0" stroke-width="12" stroke-linejoin="round" stroke-linecap="round" shape-rendering="crispEdges">
            <path d="M495 172L303 364V408L350 456H572L643 385M411 456V1054L390 1077V1486L525 1616V1811M284 1054H308L330 1077H390"/>
            <path d="M460 385L723 123H1998L2046 171M520 385L570 336H1822L1987 172M1005 385L1043 347H1542L1608 417H2335L2337 575 2289 623V1232"/>
            <path d="M703 385L868 548H1028L1470 990 1773 1296H2164L2228 1233M763 385L912 537H1033L1314 816H1588L1626 855V935L1976 1285H2060L2107 1233"/>
            <path d="M826 385L960 521H1562L2164 1120V1232M886 385L1008 509H2289M946 385L1054 494H1197L1240 450H2289M1087 477H1197L1287 385M1087 451H1162L1225 385"/>
            <path d="M967 571L630 902V1558L798 1725V1811M907 943L645 1203V1552L858 1762V1811M1012 598L923 685V1732L960 1764H1272L1317 1811M960 1770L873 1860"/>
            <path d="M1012 718L985 745 966 762V1152L1348 1535M1012 778V1138L1408 1535M343 1811L390 1860H1327L1377 1811 1435 1752H1893M981 1811L1030 1860"/>
            <path d="M1105 1537L1140 1572H1545L1763 1350H2230L2349 1230V380L2290 322V172M1317 1811L1362 1763H1368L1740 1392H1893M1627 1812L1655 1779H1752L1774 1806H1893M1833 842L1983 990V1232M960 515H1562M1980 1290H2060"/>
          </g>
          <!-- top copper -->
          <g fill="none" stroke="#c50d0d" stroke-width="12" stroke-linejoin="round" stroke-linecap="round" opacity=".81" shape-rendering="crispEdges">
            <path d="M1467 383L1402 315H343L250 408V1566L370 1685V1840L390 1860H1270L1287 1841V1643L1107 1465V385M556 172L686 303H1448L1530 383M686 309H1445"/>
            <path d="M618 174H1810L1855 222H1877L1924 174M1864 171L1912 123H2176L2282 228V378L2349 442V932L2077 1202V1270L1920 1425M1924 180L2262 537H2318L2345 560M2345 575L1922 996"/>
            <path d="M1833 902L2043 1123V1232M1833 962L1868 1008V1235L1575 1530H1530M1833 1021L1827 1077 1473 1430V1535M1165 385L1340 564H2289"/>
            <path d="M1408 383L1360 336H1085L1053 370V383L1019 417H978L343 1054M1348 383L1318 347H1090L1067 373V388L1025 429H985L378 1036V1055L355 1077H282L264 1096V1558L405 1698V1811M407 1054L798 662H1012M1085 341H1355M978 423H1022"/>
            <path d="M1087 451L967 571M1086 478V764L907 943M466 1054L505 1090H512L858 1435V1537L1131 1806H1255M525 1806H686L723 1764H942L981 1811M740 1811L785 1860M466 1811L420 1856"/>
            <path d="M1225 1537L1270 1584H1562L1635 1512H1893M1288 1537L1320 1572H1548L1672 1452H1893M1290 1578H1560M1987 1233L1860 1370V1398L1882 1420H1910L1929 1438V1713L1893 1750M2045 1233L1893 1387M1893 1691H1857L1735 1812"/>
          </g>
          <g id="pads" fill="#3edc98" opacity=".8"></g>
          <g id="drills"></g>
          <g fill="#e0b4a8" stroke="#32b07a" stroke-width="4"><circle cx="967" cy="571" r="8"/><circle cx="1087" cy="451" r="8"/><circle cx="1087" cy="478" r="8"/><circle cx="907" cy="943" r="8"/></g>
          <!-- silkscreen names -->
          <g fill="#999" font-family="Liberation Sans" font-size="43">
            <text x="495" y="97" textLength="110">GNSS</text><text x="2196" y="97" textLength="182" lengthAdjust="spacingAndGlyphs">NAPAJENI</text><text x="1996" y="247" textLength="108">RTC1</text>
            <text x="2036" y="972" textLength="222" lengthAdjust="spacingAndGlyphs">CTECKASD</text><text x="371" y="1921" textLength="126">RS232</text><text x="796" y="1921" textLength="166">BUTTON</text>
            <text x="1219" y="1914" textLength="188">GND/VCC</text><text x="1604" y="1873" textLength="144">REPRO</text>
            <text transform="translate(2394 537) rotate(-90)" textLength="90">RGB</text>
            <text x="768" y="293" font-size="21" font-weight="700" textLength="63" lengthAdjust="spacingAndGlyphs" stroke="#999" stroke-width="2">EKU/14</text>
          </g>
          <path d="M480 98h28M493 84v28M2184 98h28M2197 84v28M2096 217h28M2110 203v28M2247 943h28M2260 929v28M2384 538h28M2398 524v28M360 1922h28M373 1908v28M785 1922h28M799 1908v28M1397 1885h28M1411 1871v28M1593 1872h28M1606 1858v28" stroke="#b0b0b0" stroke-width="3"/>
          <!-- keepout boxes and copper text -->
          <g fill="url(#hatch)" stroke="#ff2a00" stroke-width="3"><rect x="788.500" y="19.500" width="918" height="75"/><rect x="274.500" y="1102.500" width="54" height="117"/><rect x="334.500" y="1102.500" width="54" height="114"/><rect x="394.500" y="1102.500" width="54" height="117"/><rect x="457.500" y="1102.500" width="54" height="114"/><rect x="775.500" y="1284.500" width="156" height="54"/></g>
          <g fill="#b00a0a" font-family="Liberation Sans" font-size="43">
            <text x="803" y="80" font-size="57" textLength="862" lengthAdjust="spacingAndGlyphs" stroke="#b00a0a">Michal Kovar 2024 UTC recorder</text>
            <text transform="translate(316 1200) rotate(-90)" textLength="86" lengthAdjust="spacingAndGlyphs">PON</text><text transform="translate(376 1200) rotate(-90)" textLength="86" lengthAdjust="spacingAndGlyphs">TCO</text><text transform="translate(436 1200) rotate(-90)" textLength="86" lengthAdjust="spacingAndGlyphs">GND</text><text transform="translate(496 1200) rotate(-90)" textLength="86" lengthAdjust="spacingAndGlyphs">VCC</text>
            <text x="784" y="1324" textLength="134">DCF77</text>
          </g>
          <path d="M424 380v10" stroke="#ff2a00" stroke-width="3"/>
          <path d="M-18 1933.500h60M10.500 1905v60" stroke="#fff" stroke-width="3" stroke-dasharray="3 3"/>
        </svg>
        <div class="absolute right-[3px] top-[9px] flex flex-col gap-[16px] text-white font-semibold text-[12px] [&>div]:w-[27px] [&>div]:h-[145px] [&>div]:bg-[#424242] [&>div]:flex [&>div]:flex-col [&>div]:items-center [&_span]:[writing-mode:vertical-rl] [&_span]:leading-[14px]">
          <div class="pt-[8px]"><svg class="w-[17px] h-[16px] mb-[7px] shrink-0" viewBox="0 0 17 16"><rect width="17" height="16" rx="2" fill="#1e8a46"/><path d="M5 3.500h8M5 12.500h8" stroke="#f0e020" stroke-width="3" stroke-dasharray="1 1"/><rect x="4.500" y="5" width="8" height="6" fill="#1e8a46" stroke="#e8f0c0" stroke-width="1.500"/></svg><span class="tracking-[-0.25px]">MANUFACTURING</span></div>
          <div class="pt-[19px]"><svg class="w-[17px] h-[17px] mb-[9px] shrink-0" viewBox="0 0 17 17"><rect width="17" height="17" rx="2" fill="#f5a623"/><path d="M5 2h7v3H8v2h3v3H8v5H5z" fill="#444"/><path d="M8 5h4v2H8zM8 10h3v3H8z" fill="#a8865a"/></svg><span class="tracking-[-0.05px]">FUSION 360</span></div>
          <div class="pt-[19px]"><svg class="w-[17px] h-[17px] mb-[10px] shrink-0" viewBox="0 0 17 17"><rect width="17" height="17" rx="2" fill="#f5a623"/><path d="M5 2h7v3H8v2h3v3H8v5H5z" fill="#444"/><path d="M8 5h4v2H8zM8 10h3v3H8z" fill="#a8865a"/></svg><span class="tracking-[-0.4px]">FUSION TEAM</span></div>
        </div>
      </div>
      <div class="w-[16px] pl-[5px]"><div class="w-[6px] h-full bg-[#808080] rounded-full"></div></div>
    </div>
    <div class="pt-[5px] w-[1478px]"><div class="h-[6px] bg-[#808080] rounded-full"></div></div>
  </section>
</main>

<footer class="flex-1 border-t border-[#868686] flex items-center pl-[6px]">
  <span class="tracking-[-0.3px] mt-[2px]">Left-click &amp; drag to define group (or left-click to start defining a group polygon)</span>
  <div class="ml-auto flex h-full pt-px">
    <div class="w-[26px] border-l border-[#ccc] flex justify-center"><svg class="w-[20px] h-[20px]" viewBox="0 0 10 12" preserveAspectRatio="none"><path d="M7.500 0 0 6.200l4 1L2.300 12 10 6.400 6 5z" fill="#1cb954"/></svg></div>
    <div class="w-[26px] border-l border-[#ccc]"></div>
    <div class="w-[26px] border-l border-[#ccc] pl-[4px]"><svg class="w-[21px] h-[20px]" viewBox="0 0 21 20"><path d="M3 3h10v8l5 6" fill="none" stroke="#0f8de6" stroke-width="1.800"/><circle cx="3" cy="3" r="2.900" fill="#18b44b"/><circle cx="18" cy="17.500" r="2.900" fill="#18b44b"/><use href="#bolt" y="8"/></svg></div>
  </div>
</footer>

<script>
  // Pads: [shape, x list, y list, colours of the trace ends in order]; b = bottom, r = top, - = unconnected
  const rows = [
    ['v', [495,556,618,1864,1924,1987,2046,2230,2290], [172], 'brrrrbbrb'],
    ['v', [343,406,465,525,740,799,861,921,981,1255,1317,1377], [1811], 'brrrrbbbrrbb'],
    ['v', [1987,2047,2107,2166,2228,2290], [1233], 'rrbbbb'],
    ['h', [1012], [598,658,718,778], 'brbb'],
    ['h', [2289], [385,445,505,568], 'rbbr'],
    ['o', [460,520,580,643,703,763,826,886,946,1006,1105,1165,1225,1287,1348,1408,1468,1530], [385], 'bb-bbbbbbbrrbbrrrr'],
    ['o', [680,739,799,862,922,982,1042,1105,1225,1288,1348,1408,1468,1532], [1537], '---rb--brrbbrr'],
    ['o', [1534,1594], [871,931,994], '------'],
    ['o', [1627,1735], [1813], 'br'],
    ['o', [1834], [1021], 'r'],
    ['s', [1834], [842,902,962], 'brr'],
    ['s', [1894], [1387,1447,1507,1570,1630,1690,1750,1813], 'rrr--rrb'],
    ['s', [2320], [1387,1447,1507,1570,1630,1690,1750,1813], '--------'],
    ['t', [284,343,407,466], [1054], 'brrr']
  ];
  const oct = (x, y, r) => { const k = r * .41; return `<path d="M${x-k} ${y-r}H${x+k}L${x+r} ${y-k}V${y+k}L${x+k} ${y+r}H${x-k}L${x-r} ${y+k}V${y-k}z"/>`; };
  let pads = '', drills = '';
  for (const [t, xs, ys, ends] of rows) {
    let i = 0;
    for (const y of ys) for (const x of xs) {
      const e = ends[i++], c = e === 'b' ? '#0478b0' : '#a80c10';
      if (t === 'v') pads += `<rect x="${x-19}" y="${y-37}" width="38" height="74" rx="15"/>`;
      else if (t === 'h') pads += `<rect x="${x-37}" y="${y-19}" width="74" height="38" rx="15"/>`;
      else if (t === 'o') pads += `<circle cx="${x}" cy="${y}" r="26"/>`;
      else pads += oct(x, y, t === 's' ? 23 : 20);
      if (t === 't') { drills += `<path d="M${x-5} ${y}h10M${x} ${y-5}v10" stroke="${c}" stroke-width="3"/>`; continue; }
      drills += `<circle cx="${x}" cy="${y}" r="${t === 's' ? 9 : 11}" fill="#000"/>`;
      if (e !== '-') drills += `<circle cx="${x-1}" cy="${y-1}" r="7" fill="${c}"/>`;
    }
  }
  document.getElementById('pads').innerHTML = pads;
  document.getElementById('drills').innerHTML = drills;
</script>
</body>
</html>
